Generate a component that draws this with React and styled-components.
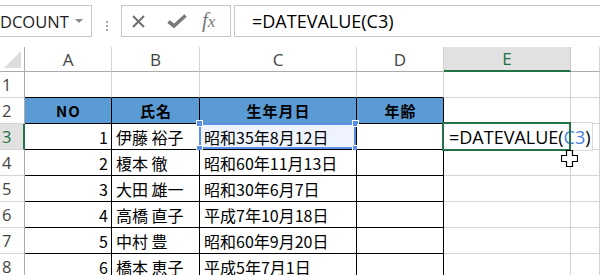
import React from 'react';
import styled, { createGlobalStyle, css } from 'styled-components';

const GREEN = '#217346';
const GRID = '#d4d4d4';
const HEAD_LINE = '#ababab';
const REF_BLUE = '#5b8ee6';
const TABLE_BLUE = '#5b9bd5';

const GlobalStyle = createGlobalStyle`
  html, body {
    margin: 0;
    padding: 0;
    background: #fff;
    overflow: hidden;
  }
  body {
    font-family: "Noto Sans CJK JP", sans-serif;
  }
`;

const Page = styled.div`
  width: 600px;
  height: 275px;
  overflow: hidden;
  position: relative;
`;

// ---- formula bar ----

const FormulaBar = styled.div`
  height: 47px;
  box-sizing: border-box;
  padding-top: 5px;
  display: flex;
  align-items: flex-start;
`;

const Box = styled.div`
  height: 32px;
  box-sizing: border-box;
  border: 1px solid #c6c6c6;
  background: #fff;
  display: flex;
  align-items: center;
`;

const NameBox = styled(Box)`
  margin-left: -10px;
  width: 102px;
  padding-left: 9px;
  font: 16.5px "Open Sans", sans-serif;
  color: #222;
`;

const DropArrow = styled.span`
  margin-left: auto;
  margin-right: 8px;
  border-left: 4px solid transparent;
  border-right: 4px solid transparent;
  border-top: 4px solid #8a8a8a;
`;

const Grip = styled.div`
  align-self: center;
  margin: 0 13px 0 14px;
  display: flex;
  flex-direction: column;
  gap: 2px;

  span {
    width: 2px;
    height: 2px;
    background: #a8a8a8;
  }
`;

const FxButtons = styled(Box)`
  width: 110px;
  padding-left: 10px;
`;

const IconSlot = styled.div`
  width: ${(p) => p.$w}px;
  display: flex;
  align-items: center;
`;

const FxLabel = styled.span`
  font-family: "Liberation Serif", serif;
  font-style: italic;
  color: #777;
  font-size: 21px;
  line-height: 1;
  margin-top: -2px;

  small {
    font-size: 17px;
  }
`;

const FormulaInput = styled(Box)`
  flex: 1;
  margin-left: 3px;
  margin-right: -10px;
  padding-left: 17px;
  font: 18px "Open Sans", sans-serif;
  color: #000;
`;

// ---- sheet ----

const Sheet = styled.div`
  position: relative;
  display: grid;
  grid-template-columns: 25px 87px 88px 157px 87px 127px 1fr;
  grid-template-rows: 25px repeat(8, 26px);
`;

const HeadBase = styled.div`
  box-sizing: border-box;
  display: flex;
  align-items: center;
  font-family: "Open Sans", sans-serif;
  color: #444;
`;

const Corner = styled(HeadBase)`
  border-right: 1px solid ${HEAD_LINE};
  border-bottom: 1px solid ${HEAD_LINE};
  position: relative;

  &::after {
    content: '';
    position: absolute;
    right: 3px;
    bottom: 3px;
    border-left: 17px solid transparent;
    border-bottom: 17px solid #dcdcdc;
  }
`;

const ColHead = styled(HeadBase)`
  justify-content: center;
  font-size: 17px;
  border-right: 1px solid ${GRID};
  border-bottom: 1px solid ${HEAD_LINE};
  ${(p) =>
    p.$active &&
    css`
      background: #e1e1e1;
      color: ${GREEN};
      border-right-color: #c8c8c8;
      border-bottom: 2px solid ${GREEN};
    `}
`;

const RowHead = styled(HeadBase)`
  padding-left: 2px;
  font-size: 16.5px;
  border-right: 1px solid ${HEAD_LINE};
  border-bottom: 1px solid ${GRID};
  ${(p) =>
    p.$active &&
    css`
      background: #e1e1e1;
      color: ${GREEN};
      border-right: 2px solid ${GREEN};
    `}
`;

const Cell = styled.div`
  position: relative;
  box-sizing: border-box;
  display: flex;
  align-items: center;
  justify-content: ${(p) => (p.$right ? 'flex-end' : 'flex-start')};
  padding: 0 3px 0 4px;
  font-size: 16px;
  color: #000;
  white-space: nowrap;
  border-right: 1px solid ${(p) => (p.$table ? '#000' : GRID)};
  border-bottom: 1px solid ${(p) => (p.$table || p.$edge ? '#000' : GRID)};
  background: ${(p) => (p.$ref ? '#eef3fd' : '#fff')};
`;

const HeaderCell = styled(Cell)`
  justify-content: center;
  background: ${TABLE_BLUE};
  font-weight: bold;
  font-size: 15px;
  letter-spacing: 1px;
`;

const RefFrame = styled.div`
  position: absolute;
  left: -1px;
  top: -1px;
  right: 0;
  bottom: 0;
  border: 2px solid ${REF_BLUE};
  pointer-events: none;
`;

const Handle = styled.span`
  position: absolute;
  width: 5px;
  height: 5px;
  background: ${REF_BLUE};
  border: 1px solid #fff;
  ${(p) => (p.$top ? 'top: -5px;' : 'bottom: -5px;')}
  ${(p) => (p.$left ? 'left: -5px;' : 'right: -5px;')}
`;

const Editor = styled.div`
  position: absolute;
  left: -1px;
  top: -2px;
  height: 29px;
  width: 150px;
  box-sizing: border-box;
  border: 1px solid #dadada;
  background: #fff;
  z-index: 2;
  display: flex;
  align-items: center;
  padding-left: 5px;
  font: 18px "Open Sans", sans-serif;
  color: #000;

  b {
    font-weight: normal;
    color: #4a7fe0;
  }
`;

const ActiveFrame = styled.div`
  position: absolute;
  left: -2px;
  top: -2px;
  width: 129px;
  height: 29px;
  box-sizing: border-box;
  border: 2px solid ${GREEN};
  z-index: 3;
  pointer-events: none;
`;

const Cursor = styled.svg`
  position: absolute;
  left: 561px;
  top: 103px;
  z-index: 4;
`;

const people = [
  { no: 1, name: '伊藤 裕子', date: '昭和35年8月12日' },
  { no: 2, name: '榎本 徹', date: '昭和60年11月13日' },
  { no: 3, name: '大田 雄一', date: '昭和30年6月7日' },
  { no: 4, name: '高橋 直子', date: '平成7年10月18日' },
  { no: 5, name: '中村 豊', date: '昭和60年9月20日' },
  { no: 6, name: '橋本 恵子', date: '平成5年7月1日' },
];

const columns = ['A', 'B', 'C', 'D', 'E', ''];

const App = () => {
  return (
    <>
      <GlobalStyle />
      <Page>
        <FormulaBar>
          <NameBox>
            DCOUNT
            <DropArrow />
          </NameBox>
          <Grip>
            <span />
            <span />
            <span />
          </Grip>
          <FxButtons>
            <IconSlot $w={35}>
              <svg width="13" height="13" viewBox="0 0 13 13">
                <path d="M1 1 L12 12 M12 1 L1 12" stroke="#6e6e6e" strokeWidth="2" fill="none" />
              </svg>
            </IconSlot>
            <IconSlot $w={35}>
              <svg width="20" height="14" viewBox="0 0 20 14">
                <path d="M1.5 7.5 L7 12 L18.5 1.5" stroke="#7b7b7b" strokeWidth="3.6" fill="none" />
              </svg>
            </IconSlot>
            <IconSlot $w={25}>
              <FxLabel>
                f<small>x</small>
              </FxLabel>
            </IconSlot>
          </FxButtons>
          <FormulaInput>=DATEVALUE(C3)</FormulaInput>
        </FormulaBar>

        <Sheet>
          <Corner />
          {columns.map((c, i) => (
            <ColHead key={i} $active={c === 'E'}>
              {c}
            </ColHead>
          ))}

          <RowHead>1</RowHead>
          <Cell $edge />
          <Cell $edge />
          <Cell $edge />
          <Cell $edge />
          <Cell />
          <Cell />

          <RowHead>2</RowHead>
          <HeaderCell $table>NO</HeaderCell>
          <HeaderCell $table>氏名</HeaderCell>
          <HeaderCell $table>生年月日</HeaderCell>
          <HeaderCell $table>年齢</HeaderCell>
          <Cell />
          <Cell />

          {people.map((p, i) => (
            <React.Fragment key={p.no}>
              <RowHead $active={i === 0}>{i + 3}</RowHead>
              <Cell $table $right>
                {p.no}
              </Cell>
              <Cell $table>{p.name}</Cell>
              <Cell $table $ref={i === 0}>
                {p.date}
                {i === 0 && (
                  <RefFrame>
                    <Handle $top $left />
                    <Handle $top />
                    <Handle $left />
                    <Handle />
                  </RefFrame>
                )}
              </Cell>
              <Cell $table />
              <Cell>
                {i === 0 && (
                  <>
                    <Editor>
                      =DATEVALUE(<b>C3</b>)
                    </Editor>
                    <ActiveFrame />
                  </>
                )}
              </Cell>
              <Cell />
            </React.Fragment>
          ))}

          <Cursor width="17" height="17" viewBox="0 0 17 17">
            <path
              d="M5.5 0.5 H11.5 V5.5 H16.5 V11.5 H11.5 V16.5 H5.5 V11.5 H0.5 V5.5 H5.5 Z"
              fill="#fff"
              stroke="#000"
              strokeWidth="1.2"
            />
          </Cursor>
        </Sheet>
      </Page>
    </>
  );
};

export default App;
